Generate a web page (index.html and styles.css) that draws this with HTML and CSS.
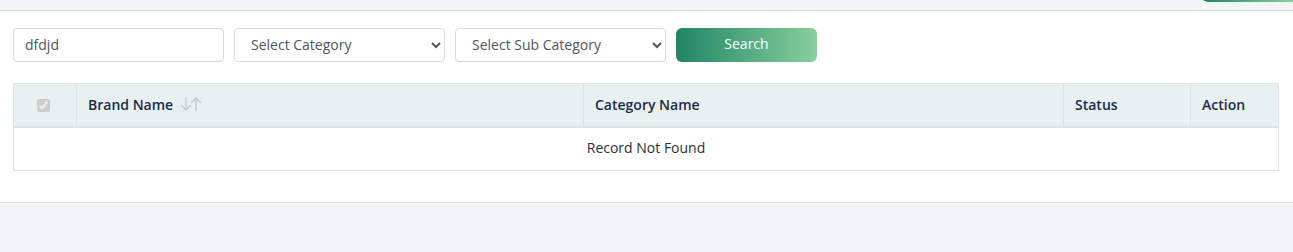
FILE: index.html
```html
<!DOCTYPE html>
<html lang="en">
<head>
  <meta charset="UTF-8">
  <meta name="viewport" content="width=device-width, initial-scale=1.0">
  <title>Brand List</title>
  <link rel="stylesheet" href="styles.css">
</head>

<body>
  <div class="topbar">
    <button type="button" class="top-btn"></button>
  </div>

  <main class="panel">
    <form class="filters">
      <input type="text" class="field" value="dfdjd">
      <select class="field">
        <option>Select Category</option>
      </select>
      <select class="field">
        <option>Select Sub Category</option>
      </select>
      <button type="button" class="search-btn">Search</button>
    </form>

    <table class="list">
      <thead>
        <tr>
          <th class="col-check"><input type="checkbox" checked disabled></th>
          <th class="col-brand">
            Brand Name
            <svg class="sort" width="22" height="14" viewBox="0 0 22 14" fill="none" stroke="#c9cbcd" stroke-width="1.6" stroke-linecap="round" stroke-linejoin="round">
              <path d="M6 1v12M1.5 8.5L6 13l4.5-4.5"/>
              <path d="M16 13V1M11.5 5.5L16 1l4.5 4.5"/>
            </svg>
          </th>
          <th class="col-category">Category Name</th>
          <th class="col-status">Status</th>
          <th class="col-action">Action</th>
        </tr>
      </thead>
      <tbody>
        <tr>
          <td colspan="5" class="empty">Record Not Found</td>
        </tr>
      </tbody>
    </table>
  </main>
</body>
</html>
```

FILE: styles.css
```css
body {
  font-family: 'Open Sans', 'Liberation Sans', sans-serif;
  background-color: #f2f5f6;
  margin: 0;
  padding: 0;
  color: #333;
}

.topbar {
  height: 10px;
  border-bottom: 1px solid #dcdfe1;
  overflow: hidden;
  display: flex;
  justify-content: flex-end;
}

.top-btn {
  width: 91px;
  height: 32px;
  margin-top: -30px;
  border: none;
  border-radius: 6px 0 0 6px;
  background: linear-gradient(90deg, #1f8565, #88cf9c);
}

.panel {
  background: white;
  padding: 17px 14px 31px 13px;
  border-bottom: 1px solid #dcdfe1;
}

.filters {
  display: flex;
  gap: 10px;
  margin: 0 0 21px;
}

.field {
  width: 211px;
  height: 34px;
  box-sizing: border-box;
  border: 1px solid #d6d9dd;
  border-radius: 4px;
  background: white;
  font-family: inherit;
  font-size: 14px;
  color: #4f5563;
  padding: 0 11px 2px;
  margin: 0;
}

select.field {
  padding: 0 8px 2px 12px;
}

.search-btn {
  width: 141px;
  height: 34px;
  border: none;
  border-radius: 6px;
  background: linear-gradient(90deg, #1f8565, #88cf9c);
  color: white;
  font-family: inherit;
  font-size: 14px;
  font-weight: 500;
  padding: 0 0 3px;
  cursor: pointer;
}

.list {
  width: 1266px;
  border-collapse: collapse;
  border: 1px solid #dee2e6;
  font-size: 14px;
}

.list th {
  background-color: #e8f1ef;
  height: 40px;
  padding: 0 11px 2px;
  text-align: left;
  font-weight: 600;
  color: #1c2b4b;
  border-right: 1px solid #dee2e6;
  border-bottom: 2px solid #dee2e6;
}

.list th:last-child {
  border-right: none;
}

.col-check {
  width: 63px;
  box-sizing: border-box;
  text-align: center !important;
}

.col-check input {
  width: 13px;
  height: 13px;
  margin: 0 0 0 -4px;
  vertical-align: middle;
}

.col-brand { width: 507px; box-sizing: border-box; }
.col-category { width: 480px; box-sizing: border-box; }
.col-status { width: 127px; box-sizing: border-box; }

.sort {
  vertical-align: -1px;
  margin-left: 3px;
}

.empty {
  height: 38px;
  text-align: center;
  padding: 0 0 4px;
  color: #2c2f36;
  border-bottom: 1px solid #dee2e6;
}
```
